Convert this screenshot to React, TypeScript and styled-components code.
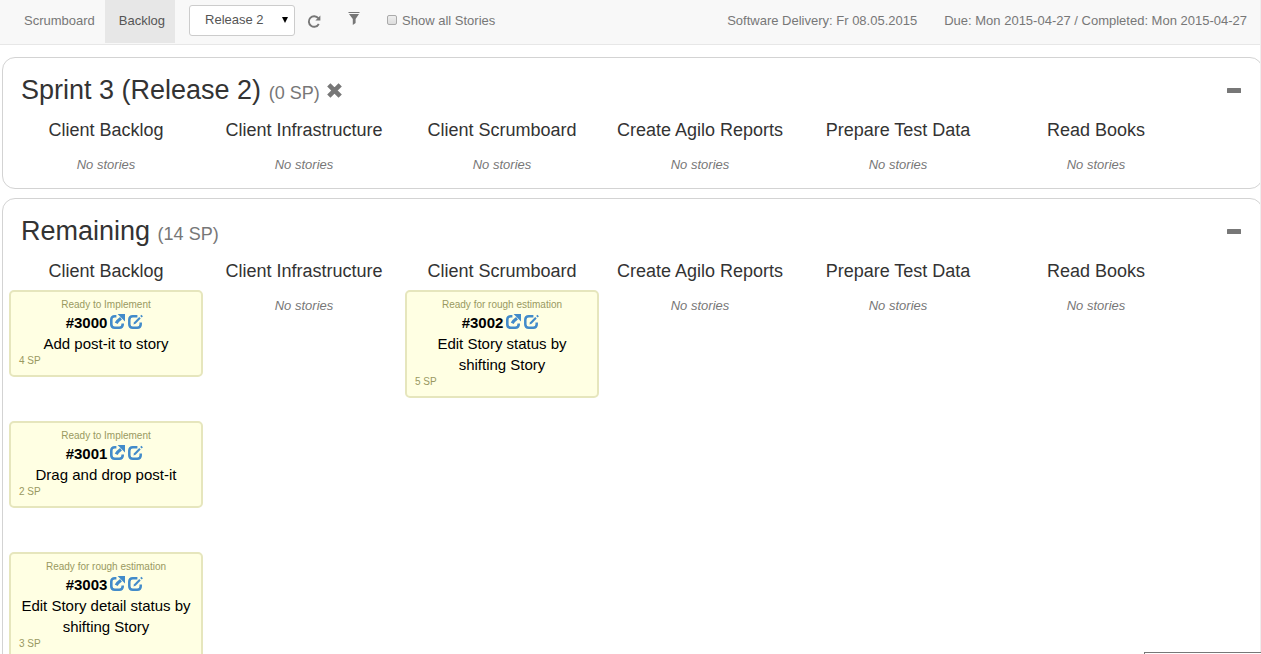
import React from "react";
import styled, { createGlobalStyle } from "styled-components";

const GlobalStyle = createGlobalStyle`
  * { box-sizing: border-box; }
  body {
    margin: 0;
    background: #fff;
    color: #333;
    font: 13px/20px "Liberation Sans", Arial, sans-serif;
  }
  button { font: inherit; border: 0; padding: 0; background: none; cursor: pointer; }
`;

const Page = styled.div`
  height: 100vh;
  overflow: hidden auto;
  scrollbar-width: none;
  border-right: 1px solid #eee;
`;

const Navbar = styled.nav`
  display: flex;
  align-items: flex-start;
  height: 45px;
  padding: 0 13px 0 10px;
  background: #f8f8f8;
  border-bottom: 1px solid #e7e7e7;
  color: #777;
  white-space: nowrap;
`;

const Tab = styled.a<{ $active?: boolean }>`
  padding: 11px 10px 12px 14px;
  color: ${(p) => (p.$active ? "#555" : "#777")};
  background: ${(p) => (p.$active ? "#e7e7e7" : "transparent")};
  text-decoration: none;
`;

const SelectBox = styled.div`
  position: relative;
  margin: 5px 0 0 14px;
`;

const Select = styled.select`
  display: block;
  appearance: none;
  width: 106px;
  height: 31px;
  padding: 0 24px 2px 15px;
  border: 1px solid #ccc;
  border-radius: 3px;
  background: #fff;
  color: #555;
  font: inherit;
`;

const Arrow = styled.svg`
  position: absolute;
  right: 7px;
  top: 12px;
  pointer-events: none;
`;

const ToolButton = styled.button`
  display: flex;
  margin: 14px 0 0 12px;
  color: #777;

  & + & { margin: 11px 0 0 26px; }
`;

const Check = styled.label`
  display: flex;
  align-items: center;
  gap: 5px;
  margin: 11px 0 0 27px;
`;

const Checkbox = styled.input`
  appearance: none;
  width: 10px;
  height: 10px;
  margin: 0 0 2px;
  border: 1px solid #aaa;
  border-radius: 2px;
  background: linear-gradient(#eee, #ddd);
`;

const Dates = styled.div`
  display: flex;
  gap: 27px;
  margin: 11px 0 0 auto;
`;

const Panels = styled.main`
  display: flex;
  flex-direction: column;
  gap: 9px;
  padding: 12px 0 9px 2px;
  overflow: hidden;
`;

const Panel = styled.section`
  margin-right: -3px;
  padding: 17px 4px 13px;
  border: 1px solid #d3d3d3;
  border-radius: 13px;
`;

const PanelHeader = styled.header`
  display: flex;
  align-items: center;
  height: 32px;
  padding: 0 17px 0 14px;
`;

const PanelTitle = styled.h2`
  margin: 0;
  font-size: 27px;
  line-height: 32px;
  font-weight: 400;
`;

const Points = styled.small`
  color: #777;
  font-size: 18px;
`;

const RemoveButton = styled.button`
  display: flex;
  margin-left: 6px;
  padding-bottom: 2px;
  color: #777;
`;

const CollapseButton = styled.button`
  display: flex;
  margin-left: auto;
  padding-bottom: 2px;
  color: #777;
`;

const Columns = styled.div`
  display: grid;
  grid-template-columns: repeat(6, 1fr);
  padding-right: 63px;
`;

const Column = styled.div`
  display: flex;
  flex-direction: column;
  padding: 0 2px;
  text-align: center;
`;

const ColumnTitle = styled.h3`
  margin: 0;
  padding: 13px 0 9px;
  font-size: 18px;
  line-height: 20px;
  font-weight: 400;
  white-space: nowrap;
`;

const Empty = styled.em`
  padding-top: 6px;
  color: #777;
`;

const Card = styled.article`
  margin-bottom: 44px;
  padding: 6px 8px 8px;
  border: 2px solid #e6e6bd;
  border-radius: 5px;
  background: #ffffe3;
  color: #000;
  font-size: 15px;
  line-height: 21px;
`;

const Status = styled.div`
  color: #999961;
  font-size: 10px;
  line-height: 14px;
`;

const Estimate = styled.div`
  color: #999961;
  font-size: 10px;
  line-height: 13px;
  text-align: left;
`;

const StoryId = styled.div`
  display: flex;
  justify-content: center;
  gap: 3px;
  padding-right: 3px;
  font-weight: 700;
`;

const IconLink = styled.a`
  display: flex;
  color: #428bca;
  padding-top: 2px;
`;

const StatusBubble = styled.div`
  position: fixed;
  right: 0;
  bottom: 0;
  width: 117px;
  height: 2px;
  border: solid #777;
  border-width: 1px 0 0 1px;
  background: #fff;
`;

const ShareIcon = () => (
  <svg width="15" height="15" viewBox="0 0 15 15" fill="none" stroke="currentColor" strokeWidth="2.6">
    <path d="M6.4 2.3H4.8Q1.3 2.3 1.3 5.8V10.2Q1.3 13.7 4.8 13.7H9.2Q12.7 13.7 12.7 10.2V9.6" />
    <path d="M6.2 9.2Q7.4 6.8 11 4.2" strokeWidth="3.2" />
    <path d="M7.6 0H15V7.4Z" fill="currentColor" stroke="none" />
  </svg>
);

const EditIcon = () => (
  <svg width="15" height="15" viewBox="0 0 15 15" fill="none" stroke="currentColor" strokeWidth="2.5">
    <path d="M9.4 2.3H4.8Q1.3 2.3 1.3 5.8V10.2Q1.3 13.7 4.8 13.7H9.2Q12.7 13.7 12.7 10.2V8.6" />
    <path d="M5.4 10.6L6.1 8.2L11.2 3.1L12.7 4.6L7.6 9.8Z" fill="currentColor" stroke="none" />
    <path d="M12.2 2L13.4 .8L14.9 2.3L13.7 3.5Z" fill="currentColor" stroke="none" />
  </svg>
);

const RefreshIcon = () => (
  <svg width="15" height="15" viewBox="0 0 15 15" fill="none" stroke="currentColor" strokeWidth="1.9">
    <path d="M11.3 4.2A5.3 5.3 0 1 0 11.8 10" />
    <path d="M13.4 1.4V6.4H8.4Z" fill="currentColor" stroke="none" />
  </svg>
);

const FilterIcon = () => (
  <svg width="12" height="14" viewBox="0 0 12 14" fill="currentColor">
    <path d="M.5 1H11.5V2H.5ZM1 3H11L7.6 8V12L4.8 14V8Z" />
  </svg>
);

const RemoveIcon = () => (
  <svg width="17" height="17" viewBox="0 0 17 17" fill="none" stroke="currentColor" strokeWidth="4.6">
    <path d="M2.8 2.8L14.2 14.2M14.2 2.8L2.8 14.2" />
  </svg>
);

const MinusIcon = () => (
  <svg width="14" height="5" viewBox="0 0 14 5" fill="currentColor">
    <rect width="14" height="5" rx="0.5" />
  </svg>
);

type Story = { id: number; status: string; title: string; points: number };

const columnNames = [
  "Client Backlog",
  "Client Infrastructure",
  "Client Scrumboard",
  "Create Agilo Reports",
  "Prepare Test Data",
  "Read Books",
];

const remaining: Record<string, Story[]> = {
  "Client Backlog": [
    { id: 3000, status: "Ready to Implement", title: "Add post-it to story", points: 4 },
    { id: 3001, status: "Ready to Implement", title: "Drag and drop post-it", points: 2 },
    { id: 3003, status: "Ready for rough estimation", title: "Edit Story detail status by shifting Story", points: 3 },
  ],
  "Client Scrumboard": [
    { id: 3002, status: "Ready for rough estimation", title: "Edit Story status by shifting Story", points: 5 },
  ],
};

const StoryCard = ({ story }: { story: Story }) => (
  <Card>
    <Status>{story.status}</Status>
    <StoryId>
      #{story.id}
      <IconLink href="#open" aria-label="Open story"><ShareIcon /></IconLink>
      <IconLink href="#edit" aria-label="Edit story"><EditIcon /></IconLink>
    </StoryId>
    <div>{story.title}</div>
    <Estimate>{story.points} SP</Estimate>
  </Card>
);

type SprintProps = {
  title: string;
  points: number;
  removable?: boolean;
  stories?: Record<string, Story[]>;
};

const Sprint = ({ title, points, removable, stories = {} }: SprintProps) => (
  <Panel>
    <PanelHeader>
      <PanelTitle>
        {title} <Points>({points} SP)</Points>
      </PanelTitle>
      {removable && (
        <RemoveButton aria-label="Remove sprint"><RemoveIcon /></RemoveButton>
      )}
      <CollapseButton aria-label="Collapse"><MinusIcon /></CollapseButton>
    </PanelHeader>
    <Columns>
      {columnNames.map((name) => (
        <Column key={name}>
          <ColumnTitle>{name}</ColumnTitle>
          {stories[name]
            ? stories[name].map((s) => <StoryCard key={s.id} story={s} />)
            : <Empty>No stories</Empty>}
        </Column>
      ))}
    </Columns>
  </Panel>
);

export default function App() {
  return (
    <Page>
      <GlobalStyle />
      <Navbar>
        <Tab href="#scrumboard">Scrumboard</Tab>
        <Tab href="#backlog" $active>Backlog</Tab>
        <SelectBox>
          <Select aria-label="Release" defaultValue="2">
            <option value="2">Release 2</option>
          </Select>
          <Arrow width="6" height="6" viewBox="0 0 6 6">
            <path d="M0 0H6L3 6Z" fill="#000" />
          </Arrow>
        </SelectBox>
        <ToolButton aria-label="Refresh"><RefreshIcon /></ToolButton>
        <ToolButton aria-label="Filter"><FilterIcon /></ToolButton>
        <Check>
          <Checkbox type="checkbox" />
          Show all Stories
        </Check>
        <Dates>
          <span>Software Delivery: Fr 08.05.2015</span>
          <span>Due: Mon 2015-04-27 / Completed: Mon 2015-04-27</span>
        </Dates>
      </Navbar>
      <Panels>
        <Sprint title="Sprint 3 (Release 2)" points={0} removable />
        <Sprint title="Remaining" points={14} stories={remaining} />
      </Panels>
      <StatusBubble />
    </Page>
  );
}
